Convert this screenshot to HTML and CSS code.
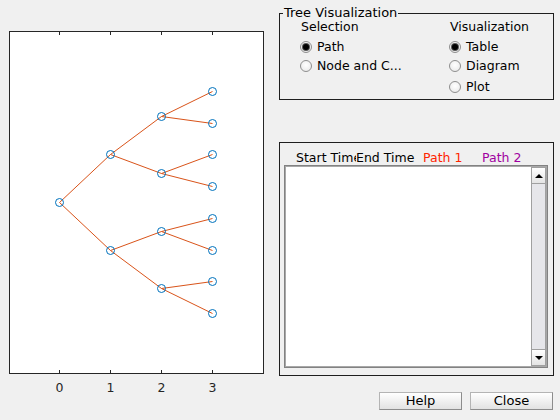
FILE: index.html
```html
<!DOCTYPE html>
<html>
<head>
<meta charset="utf-8">
<link rel="stylesheet" href="styles.css">
</head>
<body>
<div class="plot">
<svg width="270" height="420" viewBox="0 0 270 420">
  <rect x="9.5" y="31.5" width="254" height="342" fill="#fff" stroke="#262626" stroke-width="1"/>
  <g stroke="#262626" stroke-width="1">
    <line x1="59.5" y1="32" x2="59.5" y2="35"/><line x1="110.5" y1="32" x2="110.5" y2="35"/>
    <line x1="161.5" y1="32" x2="161.5" y2="35"/><line x1="212.5" y1="32" x2="212.5" y2="35"/>
    <line x1="59.5" y1="373" x2="59.5" y2="370"/><line x1="110.5" y1="373" x2="110.5" y2="370"/>
    <line x1="161.5" y1="373" x2="161.5" y2="370"/><line x1="212.5" y1="373" x2="212.5" y2="370"/>
  </g>
  <g fill="#262626" font-family="DejaVu Sans, sans-serif" font-size="12.5" text-anchor="middle">
    <text x="59.5" y="392">0</text><text x="110.5" y="392">1</text>
    <text x="161.5" y="392">2</text><text x="212.5" y="392">3</text>
  </g>
  <g stroke="#D95319" stroke-width="1" fill="none">
    <polyline points="59.5,202.5 110.5,154.5 161.5,116.5 212.5,91.5"/>
    <polyline points="161.5,116.5 212.5,123.5"/>
    <polyline points="110.5,154.5 161.5,173.5 212.5,154.5"/>
    <polyline points="161.5,173.5 212.5,186.5"/>
    <polyline points="59.5,202.5 110.5,250.5 161.5,231.5 212.5,218.5"/>
    <polyline points="161.5,231.5 212.5,250.5"/>
    <polyline points="110.5,250.5 161.5,288.5 212.5,281.5"/>
    <polyline points="161.5,288.5 212.5,313.5"/>
  </g>
  <g stroke="#0072BD" stroke-width="1" fill="none">
    <circle cx="59.5" cy="202.5" r="4"/>
    <circle cx="110.5" cy="154.5" r="4"/><circle cx="110.5" cy="250.5" r="4"/>
    <circle cx="161.5" cy="116.5" r="4"/><circle cx="161.5" cy="173.5" r="4"/>
    <circle cx="161.5" cy="231.5" r="4"/><circle cx="161.5" cy="288.5" r="4"/>
    <circle cx="212.5" cy="91.5" r="4"/><circle cx="212.5" cy="123.5" r="4"/>
    <circle cx="212.5" cy="154.5" r="4"/><circle cx="212.5" cy="186.5" r="4"/>
    <circle cx="212.5" cy="218.5" r="4"/><circle cx="212.5" cy="250.5" r="4"/>
    <circle cx="212.5" cy="281.5" r="4"/><circle cx="212.5" cy="313.5" r="4"/>
  </g>
</svg>
</div>
<div class="side">
  <fieldset class="tv">
    <legend>Tree Visualization</legend>
    <div class="cols">
      <div class="col">
        <div class="head">Selection</div>
        <div class="opt"><span class="radio on"></span>Path</div>
        <div class="opt"><span class="radio"></span>Node and C...</div>
      </div>
      <div class="col">
        <div class="head">Visualization</div>
        <div class="opt"><span class="radio on"></span>Table</div>
        <div class="opt"><span class="radio"></span>Diagram</div>
        <div class="opt last"><span class="radio"></span>Plot</div>
      </div>
    </div>
  </fieldset>
  <div class="table-panel">
    <div class="thead">
      <span class="c1">Start Time</span>
      <span class="c2">End Time</span>
      <span class="c3">Path 1</span>
      <span class="c4">Path 2</span>
    </div>
    <div class="listbox">
      <div class="list"></div>
      <div class="sb">
        <div class="sbtn"><span class="up"></span></div>
        <div class="track"></div>
        <div class="sbtn"><span class="down"></span></div>
      </div>
    </div>
  </div>
  <div class="buttons">
    <button class="btn">Help</button>
    <button class="btn">Close</button>
  </div>
</div>
</body>
</html>
```
FILE: styles.css
```css
html, body { margin: 0; padding: 0; }
body {
  width: 560px; height: 420px; overflow: hidden;
  background: #f0f0f0;
  display: flex;
  font-family: "DejaVu Sans", "Liberation Sans", sans-serif;
  font-size: 12.5px;
  color: #000;
}
.plot { width: 270px; flex: none; }
.plot svg { display: block; }
.side {
  flex: 1;
  display: flex; flex-direction: column;
  padding: 6px 6px 0 9px;
}
.tv {
  margin: 0; padding: 0 0 5px 0;
  border: 1px solid #1e1e1e;
  height: 94px; box-sizing: border-box;
}
.tv legend {
  padding: 0 1px; margin-left: 3px;
  line-height: 14px;
  font-size: 13px;
}
.cols { display: grid; grid-template-columns: 149px 1fr; padding-left: 20px; }
.head { height: 14px; line-height: 14px; padding-left: 1px; margin-bottom: 3px; }
.opt { height: 19px; display: flex; align-items: center; gap: 5px; white-space: nowrap; }
.opt.last { margin-top: 2px; }
.radio {
  width: 10px; height: 10px; border-radius: 50%;
  border: 1px solid #8e8e8e;
  background: radial-gradient(circle at 50% 40%, #ffffff, #e6e6e6);
  display: flex; align-items: center; justify-content: center;
  flex: none;
}
.radio.on::after {
  content: ""; width: 6px; height: 6px; border-radius: 50%;
  background: #000; box-shadow: 0 0 0 1px #555;
}
.table-panel {
  margin-top: 42px;
  height: 234px; box-sizing: border-box;
  border: 1px solid #1e1e1e;
  padding: 0 5px 7px 4px;
  display: flex; flex-direction: column;
}
.thead {
  display: flex; height: 22px; box-sizing: border-box;
  padding-top: 8px; line-height: 14px; padding-left: 12px;
  white-space: nowrap;
}
.thead span { overflow: hidden; display: block; flex: none; }
.c1 { width: 60px; }
.c2 { width: 67px; }
.c3 { width: 59px; color: #ff2400; }
.c4 { color: #a000a0; }
.listbox {
  flex: 1; display: flex;
  border: 1px solid #828282;
  box-shadow: inset 0 0 0 1px #a8a8a8;
  background: #fff;
  padding: 1px;
}
.list { flex: 1; }
.sb { width: 15px; display: flex; flex-direction: column; }
.sbtn {
  height: 15px; border: 1px solid #a0a0a0;
  background: linear-gradient(#ffffff, #e4e4e4);
  display: flex; align-items: center; justify-content: center;
}
.track { flex: 1; background: #e6e6ea; border-left: 1px solid #a0a0a0; border-right: 1px solid #a0a0a0; }
.up { width: 0; height: 0; border-left: 4px solid transparent; border-right: 4px solid transparent; border-bottom: 4px solid #000; }
.down { width: 0; height: 0; border-left: 4px solid transparent; border-right: 4px solid transparent; border-top: 4px solid #000; }
.buttons {
  margin-top: 16px; display: flex; justify-content: flex-end; gap: 8px;
  padding-right: 1px;
}
.btn {
  width: 83px; height: 18px; padding: 0;
  font-family: "DejaVu Sans", "Liberation Sans", sans-serif; font-size: 13px;
  color: #000;
  background: linear-gradient(#ffffff, #e2e2e2);
  border: 1px solid #b4b4b4;
  border-right-color: #8c8c8c; border-bottom-color: #8c8c8c;
  line-height: 16px;
}
```
